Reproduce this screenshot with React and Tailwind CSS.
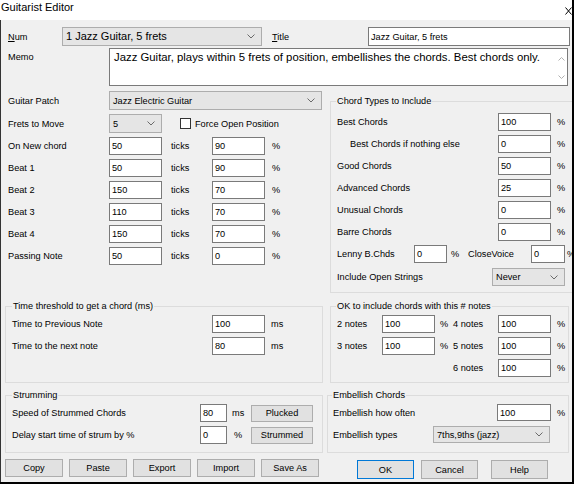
import React from "react";

const Chevron = () => (
  <svg width="8" height="5" viewBox="0 0 8 5" className="shrink-0">
    <polyline points="0.5,0.5 4,4 7.5,0.5" fill="none" stroke="#6a6a6a" strokeWidth="1" />
  </svg>
);

const Input = ({ cls = "", v, h = "h-[18px]" }) => (
  <div className={`flex items-center bg-white border border-[#7a7a7a] pl-[2px] shrink-0 ${h} ${cls}`}>{v}</div>
);

const Combo = ({ cls = "", v, h = "h-[19px]", tcls = "" }) => (
  <div className={`flex items-center justify-between bg-[#e5e5e5] border border-[#adadad] pl-[3px] pr-[6px] shrink-0 ${h} ${cls}`}>
    <span className={tcls}>{v}</span>
    <Chevron />
  </div>
);

const Btn = ({ cls = "", children }) => (
  <div className={`flex items-center justify-center bg-[#e1e1e1] border shrink-0 ${cls}`}>{children}</div>
);

const TickRow = ({ label, a, b }) => (
  <div className="flex items-center h-[18px] mt-[4px]">
    <span className="ml-[7px] w-[101px] shrink-0">{label}</span>
    <Input cls="w-[53px]" v={a} />
    <span className="w-[50px] pl-[9px] shrink-0">ticks</span>
    <Input cls="w-[53px]" v={b} />
    <span className="ml-[7px]">%</span>
  </div>
);

const ChordRow = ({ label, v, indent, first }) => (
  <div className={`flex items-center h-[18px] pl-[6px] ${first ? "mt-[6px]" : "mt-[4px]"}`}>
    <span className={`w-[161px] shrink-0 ${indent ? "pl-[13px]" : ""}`}>{label}</span>
    <Input cls="w-[53px]" v={v} />
    <span className="ml-[6px]">%</span>
  </div>
);

export default function App() {
  return (
    <div className="w-[574px] h-[484px] bg-[#f0f0f0] flex flex-col overflow-hidden text-black text-[9.2px] leading-[12px] border-r-2 border-b-2 border-black [font-family:'Liberation_Sans',Arial,sans-serif]">
      {/* Title bar */}
      <div className="h-[20px] bg-white flex items-start justify-between shrink-0">
        <span className="text-[11px] leading-[13px] pl-[1px] pt-[1px]">Guitarist Editor</span>
        <svg width="7" height="8" viewBox="0 0 7 8" className="mt-[7px] mr-0">
          <path d="M0.5 0.5 L6.5 7.5 M6.5 0.5 L0.5 7.5" stroke="#000" strokeWidth="1" fill="none" />
        </svg>
      </div>

      {/* Body */}
      <div className="flex-1 flex flex-col border-l border-[#333]">
        {/* Num / Title row */}
        <div className="flex items-center h-[19px] mt-[7px]">
          <span className="ml-[7px] w-[54px] shrink-0">
            <span className="underline">N</span>um
          </span>
          <Combo cls="w-[200px]" v="1 Jazz Guitar, 5 frets" tcls="text-[11px] leading-[13px]" />
          <span className="ml-[10px] w-[96px] shrink-0">
            <span className="underline">T</span>itle
          </span>
          <Input cls="w-[202px]" h="h-[19px]" v="Jazz Guitar, 5 frets" />
        </div>

        {/* Memo row */}
        <div className="flex h-[38px] mt-[2px]">
          <span className="ml-[7px] w-[101px] pt-[3px] shrink-0">Memo</span>
          <div className="w-[459px] h-[38px] bg-white border border-[#7a7a7a] flex justify-between shrink-0">
            <span className="text-[11.35px] leading-[13px] pl-[4px] pt-[2px]">
              Jazz Guitar, plays within 5 frets of position, embellishes the chords. Best chords only.
            </span>
            <div className="flex flex-col justify-between items-center w-[12px] pt-[8px] pb-[6px] shrink-0">
              <svg width="7" height="4" viewBox="0 0 7 4">
                <polyline points="0.5,3.5 3.5,0.5 6.5,3.5" fill="none" stroke="#b0b0b0" strokeWidth="1" />
              </svg>
              <svg width="7" height="4" viewBox="0 0 7 4">
                <polyline points="0.5,0.5 3.5,3.5 6.5,0.5" fill="none" stroke="#b0b0b0" strokeWidth="1" />
              </svg>
            </div>
          </div>
        </div>

        {/* Columns */}
        <div className="flex">
          {/* Left column */}
          <div className="w-[329px] flex flex-col shrink-0">
            <div className="flex items-center h-[19px] mt-[5px]">
              <span className="ml-[7px] w-[101px] shrink-0">Guitar Patch</span>
              <Combo cls="w-[213px]" v="Jazz Electric Guitar" />
            </div>
            <div className="flex items-center h-[19px] mt-[4px]">
              <span className="ml-[7px] w-[101px] shrink-0">Frets to Move</span>
              <Combo cls="w-[53px]" v="5" />
              <div className="ml-[18px] w-[11px] h-[11px] bg-white border border-[#333] shrink-0" />
              <span className="ml-[4px]">Force Open Position</span>
            </div>
            <TickRow label="On New chord" a="50" b="90" />
            <TickRow label="Beat 1" a="50" b="90" />
            <TickRow label="Beat 2" a="150" b="70" />
            <TickRow label="Beat 3" a="110" b="70" />
            <TickRow label="Beat 4" a="150" b="70" />
            <TickRow label="Passing Note" a="50" b="0" />

            <fieldset className="mt-[35px] ml-[4px] w-[318px] h-[83px] border border-[#dcdcdc] shrink-0">
              <legend className="ml-[6px] px-[1px] leading-[12px]">Time threshold to get a chord (ms)</legend>
              <div className="flex items-center h-[18px] mt-[3px] pl-[6px]">
                <span className="w-[200px] shrink-0">Time to Previous Note</span>
                <Input cls="w-[53px]" v="100" />
                <span className="ml-[6px]">ms</span>
              </div>
              <div className="flex items-center h-[18px] mt-[4px] pl-[6px]">
                <span className="w-[200px] shrink-0">Time to the next note</span>
                <Input cls="w-[53px]" v="80" />
                <span className="ml-[6px]">ms</span>
              </div>
            </fieldset>

            <fieldset className="mt-[6px] ml-[4px] w-[318px] h-[64px] border border-[#dcdcdc] shrink-0">
              <legend className="ml-[6px] px-[1px] leading-[12px]">Strumming</legend>
              <div className="flex items-center h-[18px] mt-[3px] pl-[6px]">
                <span className="w-[188px] shrink-0">Speed of Strummed Chords</span>
                <Input cls="w-[27px]" v="80" />
                <span className="w-[24px] pl-[5px] shrink-0">ms</span>
                <Btn cls="w-[62px] h-[17px] border-[#adadad]">Plucked</Btn>
              </div>
              <div className="flex items-center h-[18px] mt-[4px] pl-[6px]">
                <span className="w-[188px] shrink-0">Delay start time of strum by %</span>
                <Input cls="w-[27px]" v="0" />
                <span className="w-[24px] pl-[7px] shrink-0">%</span>
                <Btn cls="w-[62px] h-[17px] border-[#adadad]">Strummed</Btn>
              </div>
            </fieldset>

            <div className="flex gap-[6px] mt-[6px] ml-[4px]">
              <Btn cls="w-[58px] h-[18px] border-[#adadad]">Copy</Btn>
              <Btn cls="w-[58px] h-[18px] border-[#adadad]">Paste</Btn>
              <Btn cls="w-[58px] h-[18px] border-[#adadad]">Export</Btn>
              <Btn cls="w-[58px] h-[18px] border-[#adadad]">Import</Btn>
              <Btn cls="w-[58px] h-[18px] border-[#adadad]">Save As</Btn>
            </div>
          </div>

          {/* Right column */}
          <div className="w-[240px] flex flex-col shrink-0">
            <fieldset className="mt-[9px] w-[239px] h-[198px] border border-[#dcdcdc] shrink-0">
              <legend className="ml-[5px] px-[1px] leading-[12px]">Chord Types to Include</legend>
              <ChordRow first label="Best Chords" v="100" />
              <ChordRow indent label="Best Chords if nothing else" v="0" />
              <ChordRow label="Good Chords" v="50" />
              <ChordRow label="Advanced Chords" v="25" />
              <ChordRow label="Unusual Chords" v="0" />
              <ChordRow label="Barre Chords" v="0" />
              <div className="flex items-center h-[18px] mt-[4px] pl-[6px]">
                <span className="w-[77px] shrink-0">Lenny B.Chds</span>
                <Input cls="w-[33px]" v="0" />
                <span className="w-[21px] pl-[4px] shrink-0">%</span>
                <span className="w-[63px] shrink-0">CloseVoice</span>
                <Input cls="w-[34px]" v="0" />
                <span className="pl-[2px] shrink-0">%</span>
              </div>
              <div className="flex items-center h-[18px] mt-[5px] pl-[6px]">
                <span className="w-[155px] shrink-0">Include Open Strings</span>
                <Combo cls="w-[73px]" h="h-[18px]" v="Never" />
              </div>
            </fieldset>

            <fieldset className="mt-[7px] w-[239px] h-[83px] border border-[#dcdcdc] shrink-0">
              <legend className="ml-[5px] px-[1px] leading-[12px]">OK to include chords with this # notes</legend>
              <div className="flex items-center h-[18px] mt-[3px] pl-[6px]">
                <span className="w-[45px] shrink-0">2 notes</span>
                <Input cls="w-[53px]" v="100" />
                <span className="w-[18px] pl-[5px] shrink-0">%</span>
                <span className="w-[45px] shrink-0">4 notes</span>
                <Input cls="w-[53px]" v="100" />
                <span className="ml-[6px]">%</span>
              </div>
              <div className="flex items-center h-[18px] mt-[4px] pl-[6px]">
                <span className="w-[45px] shrink-0">3 notes</span>
                <Input cls="w-[53px]" v="100" />
                <span className="w-[18px] pl-[5px] shrink-0">%</span>
                <span className="w-[45px] shrink-0">5 notes</span>
                <Input cls="w-[53px]" v="100" />
                <span className="ml-[6px]">%</span>
              </div>
              <div className="flex items-center h-[18px] mt-[4px] pl-[6px]">
                <span className="w-[116px] shrink-0" />
                <span className="w-[45px] shrink-0">6 notes</span>
                <Input cls="w-[53px]" v="100" />
                <span className="ml-[6px]">%</span>
              </div>
            </fieldset>

            <fieldset className="mt-[6px] -ml-[3px] w-[242px] h-[64px] border border-[#dcdcdc] shrink-0">
              <legend className="ml-[4px] px-[1px] leading-[12px]">Embellish Chords</legend>
              <div className="flex items-center h-[17px] mt-[3px] pl-[5px]">
                <span className="w-[164px] shrink-0">Embellish how often</span>
                <Input cls="w-[54px]" h="h-[17px]" v="100" />
                <span className="ml-[6px]">%</span>
              </div>
              <div className="flex items-center h-[17px] mt-[5px] pl-[5px]">
                <span className="w-[100px] shrink-0">Embellish types</span>
                <Combo cls="w-[117px]" h="h-[17px]" v="7ths,9ths (jazz)" />
              </div>
            </fieldset>

            <div className="flex mt-[7px]">
              <Btn cls="ml-[27px] w-[57px] h-[19px] border-[#0078d7]">OK</Btn>
              <Btn cls="ml-[7px] w-[57px] h-[19px] border-[#adadad]">Cancel</Btn>
              <Btn cls="ml-[13px] w-[57px] h-[19px] border-[#adadad]">Help</Btn>
            </div>
          </div>
        </div>
      </div>
    </div>
  );
}
